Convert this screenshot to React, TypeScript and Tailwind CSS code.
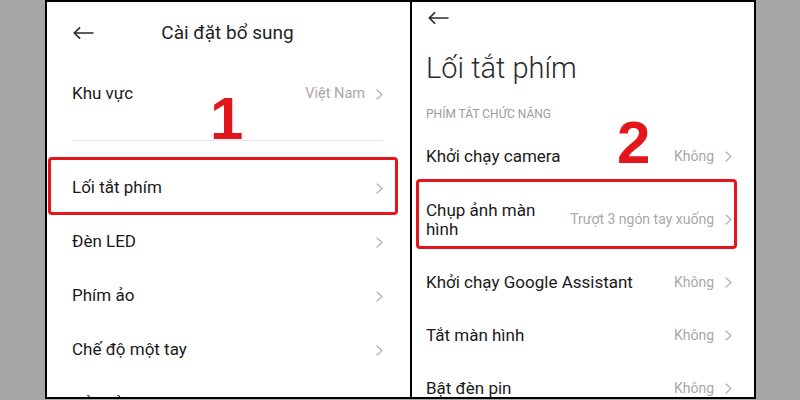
import React from "react";

const Chevron = () => (
  <svg width="7" height="11" viewBox="0 0 7 11" fill="none">
    <path d="M1 1 L6 5.5 L1 10" stroke="#b3b3b3" strokeWidth="1.3" strokeLinecap="round" strokeLinejoin="round" />
  </svg>
);

const BackArrow = () => (
  <svg width="21" height="12" viewBox="0 0 21 12" fill="none">
    <path d="M20 6 H1.2 M6.6 0.8 L1.2 6 L6.6 11.2" stroke="#2a2a2a" strokeWidth="1.6" strokeLinecap="round" strokeLinejoin="round" />
  </svg>
);

const LeftRow = ({ label, value }: { label: string; value?: string }) => (
  <div className="flex h-[54px] shrink-0 items-center justify-between">
    <span className="text-[17px] text-[#1a1a1a]">{label}</span>
    <div className="flex items-center gap-[11px]">
      {value && <span className="text-[14.5px] text-[#a8a8a8]">{value}</span>}
      <Chevron />
    </div>
  </div>
);

const RightRow = ({ label, value, tall }: { label: string; value: string; tall?: boolean }) => (
  <div className={tall ? "flex h-[73px] shrink-0 items-center justify-between" : "flex h-[53px] shrink-0 items-center justify-between"}>
    <span className={tall ? "w-[125px] text-[17px] leading-[19px] text-[#1a1a1a]" : "text-[17px] text-[#1a1a1a]"}>{label}</span>
    <div className="flex items-center gap-[11px]">
      <span className="text-[14px] text-[#a8a8a8]">{value}</span>
      <Chevron />
    </div>
  </div>
);

export default function App() {
  return (
    <div
      className="relative h-[400px] w-[800px] overflow-hidden bg-[#a6a6a6]"
      style={{ fontFamily: "Roboto, 'Noto Sans', sans-serif" }}
    >
      <div className="ml-[45px] flex h-[399px] w-[711px] border-2 border-black bg-white">
        {/* Left panel */}
        <div className="flex w-[363px] flex-col overflow-hidden pl-[25px] pr-[27px]">
          <div className="grid h-[62px] shrink-0 grid-cols-[1fr_auto_1fr] items-center">
            <div className="pl-[1px]">
              <BackArrow />
            </div>
            <span className="text-[19px] text-[#1f1f1f]">Cài đặt bổ sung</span>
            <div />
          </div>
          <div className="mt-[3px] flex shrink-0 flex-col">
            <LeftRow label="Khu vực" value="Việt Nam" />
          </div>
          <div className="mt-[19px] h-px shrink-0 bg-[#e6e6e6]" />
          <div className="mt-[20px] flex shrink-0 flex-col">
            <LeftRow label="Lối tắt phím" />
            <LeftRow label="Đèn LED" />
            <LeftRow label="Phím ảo" />
            <LeftRow label="Chế độ một tay" />
            <LeftRow label="Cử chỉ toàn màn hình" />
          </div>
        </div>
        <div className="w-[2px] shrink-0 bg-black" />
        {/* Right panel */}
        <div className="flex flex-1 flex-col overflow-hidden pl-[14px] pr-[22px]">
          <div className="flex h-[32px] shrink-0 items-center pl-[2px]">
            <BackArrow />
          </div>
          <div className="mt-[16px] h-[36px] shrink-0 text-[29px] font-light leading-[36px] text-[#2a2a2a]">
            Lối tắt phím
          </div>
          <div className="mt-[20px] h-[16px] shrink-0 text-[12px] leading-[16px] text-[#9b9ba6]">
            PHÍM TẮT CHỨC NĂNG
          </div>
          <div className="mt-[8px] flex shrink-0 flex-col">
            <RightRow label="Khởi chạy camera" value="Không" />
            <RightRow label="Chụp ảnh màn hình" value="Trượt 3 ngón tay xuống" tall />
            <RightRow label="Khởi chạy Google Assistant" value="Không" />
            <RightRow label="Tắt màn hình" value="Không" />
            <RightRow label="Bật đèn pin" value="Không" />
          </div>
        </div>
      </div>

      {/* Annotations */}
      <div className="absolute left-[48px] top-[157px] h-[58px] w-[350px] rounded-[4px] border-[3px] border-[#e3161c]" />
      <div className="absolute left-[416px] top-[179px] h-[70px] w-[321px] rounded-[4px] border-[3px] border-[#e3161c]" />
      <div
        className="absolute left-[210px] top-[89px] text-[60px] font-bold leading-[60px] text-[#e3161c]"
        style={{ fontFamily: "'Liberation Sans', Arial, sans-serif" }}
      >
        1
      </div>
      <div
        className="absolute left-[617px] top-[113px] text-[60px] font-bold leading-[60px] text-[#e3161c]"
        style={{ fontFamily: "'Liberation Sans', Arial, sans-serif" }}
      >
        2
      </div>
    </div>
  );
}
